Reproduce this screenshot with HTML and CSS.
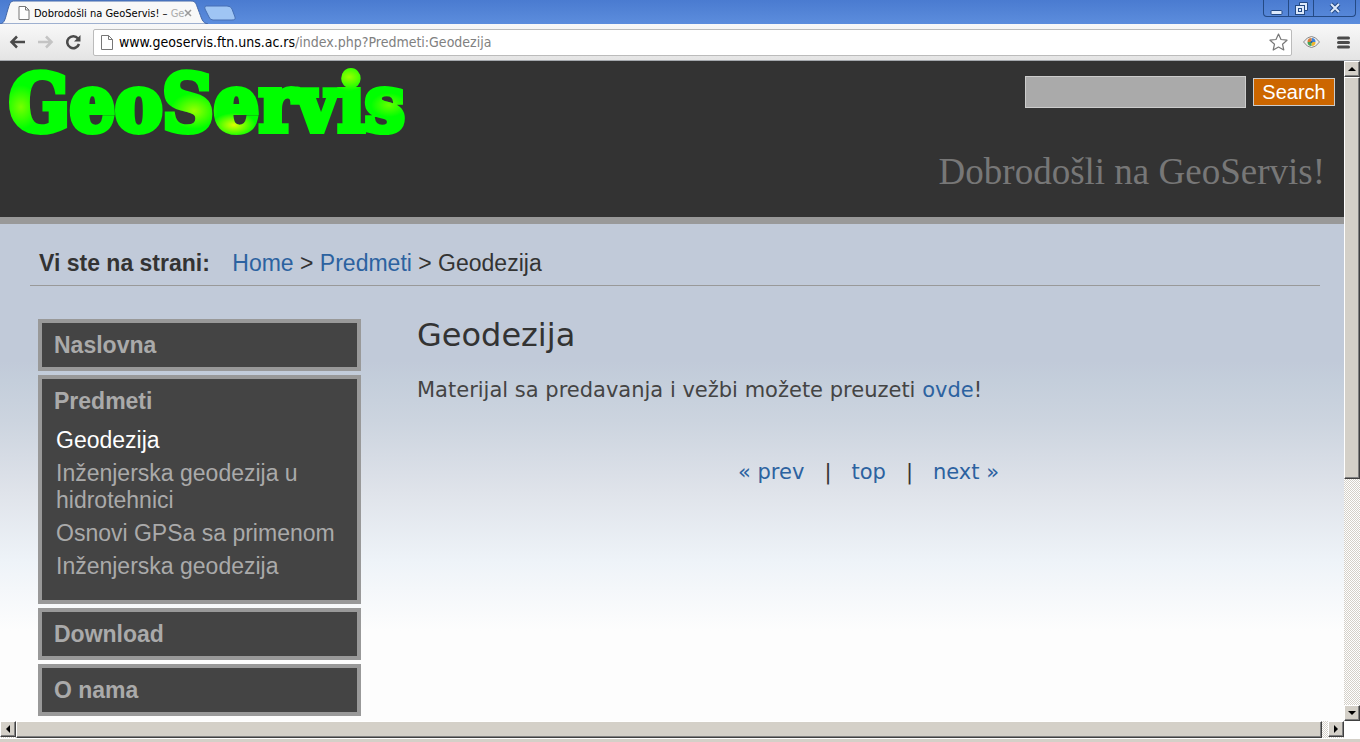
FILE: index.html
```html
<!DOCTYPE html>
<html lang="sr">
<head>
  <meta charset="utf-8">
  <title>Dobrodošli na GeoServis! – Geodezija</title>
  <meta name="viewport" content="width=device-width, initial-scale=1.0">
  <link rel="stylesheet" href="styles.css">
</head>
<body>
  <div class="tabstrip">
    <svg class="tab-shape" width="246" height="24" viewBox="0 0 246 24">
      <path d="M0 24 C5 23 5 19 8 9 C10 3 10 1 15 1 H191 C196 1 196 4 198 9 C202 19 202 23 208 24 Z" fill="#f8f8f8" stroke="#4468a8" stroke-width="1"/>
      <path d="M206 6 H227 Q231 6 232 9 L235 17 Q236 20 232 20 H213 Q210 20 209 17 L205 9 Q204 6 206 6 Z" fill="#9fc5f4" stroke="#466fb4"/>
    </svg>
    <div class="tab">
      <svg width="12" height="14" viewBox="0 0 12 14"><path d="M1 .5 H7.500 L11 4 V13.500 H1 Z M7.500 .5 V4 H11" fill="#fff" stroke="#777"/></svg>
      <span class="tab-title">Dobrodošli na GeoServis! – <span>Ge</span></span>
      <button class="tab-close" aria-label="Close tab"><svg width="8" height="8" viewBox="0 0 8 8"><path d="M1 1 L7 7 M7 1 L1 7" stroke="#999" stroke-width="1.500"/></svg></button>
    </div>
    <div class="window-buttons">
      <button class="minimize" aria-label="Minimize"><svg width="13" height="13" viewBox="0 0 13 13"><rect x="1" y="8.500" width="11" height="4" rx="1" fill="#dce9fb" stroke="#244a85"/></svg></button>
      <button class="restore" aria-label="Restore"><svg width="13" height="13" viewBox="0 0 13 13"><path d="M4.500 .5 H12.500 V8.500 H9.500 V3.500 H4.500 Z" fill="#dce9fb" stroke="#244a85"/><rect x=".5" y="3.500" width="9" height="9" fill="#dce9fb" stroke="#244a85"/><rect x="3.500" y="6.500" width="3" height="3" fill="#dce9fb" stroke="#244a85"/></svg></button>
      <button class="close" aria-label="Close"><svg width="12" height="12" viewBox="0 0 12 12"><path d="M2 2 L10 10 M10 2 L2 10" stroke="#244a85" stroke-width="4"/><path d="M2 2 L10 10 M10 2 L2 10" stroke="#dce9fb" stroke-width="2"/></svg></button>
    </div>
  </div>

  <div class="toolbar">
    <button aria-label="Back"><svg width="17" height="16" viewBox="0 0 17 16"><path d="M16 8 H3 M8 2.500 L2.500 8 L8 13.500" fill="none" stroke="#4a4a4a" stroke-width="2.500"/></svg></button>
    <button aria-label="Forward"><svg width="17" height="16" viewBox="0 0 17 16"><path d="M1 8 H14 M9 2.500 L14.500 8 L9 13.500" fill="none" stroke="#c4c4c4" stroke-width="2.500"/></svg></button>
    <button aria-label="Reload"><svg width="17" height="16" viewBox="0 0 17 16"><path d="M13 4.500 A6 6 0 1 0 14 10" fill="none" stroke="#4a4a4a" stroke-width="2.500"/><path d="M15.500 1 V7.500 H9 Z" fill="#4a4a4a"/></svg></button>
    <div class="address">
      <svg width="12" height="15" viewBox="0 0 12 15"><path d="M.5 .5 H7.500 L11.500 4.500 V14.500 H.5 Z M7.500 .5 V4.500 H11.500" fill="#fff" stroke="#777"/></svg>
      <div class="url">www.geoservis.ftn.uns.ac.rs<span>/index.php?Predmeti:Geodezija</span></div>
      <svg width="19" height="18" viewBox="0 0 19 18"><path d="M9.500 1 L12 6.500 L18 7.200 L13.500 11.200 L14.800 17 L9.500 14 L4.200 17 L5.500 11.200 L1 7.200 L7 6.500 Z" fill="#fff" stroke="#777" stroke-width="1.200" stroke-linejoin="round"/></svg>
    </div>
    <svg class="eye" width="17" height="12" viewBox="0 0 17 12">
      <path d="M.5 6 Q8.500 -5 16.500 6 Q8.500 17 .5 6 Z" fill="#eee" stroke="#888"/>
      <path d="M8.500 6 V2 A4 4 0 0 1 12.500 6 Z" fill="#3d82d8"/><path d="M8.500 6 H12.500 A4 4 0 0 1 8.500 10 Z" fill="#efb62e"/>
      <path d="M8.500 6 V10 A4 4 0 0 1 4.500 6 Z" fill="#44a356"/><path d="M8.500 6 H4.500 A4 4 0 0 1 8.500 2 Z" fill="#dd7b35"/>
      <circle cx="8.500" cy="6" r="1" fill="#22599c"/>
    </svg>
    <button class="menu" aria-label="Menu"><svg width="13" height="13" viewBox="0 0 13 13"><path d="M1.500 2 H11.500 M1.500 6.500 H11.500 M1.500 11 H11.500" stroke="#4a4a4a" stroke-width="3" stroke-linecap="round"/></svg></button>
  </div>

  <div class="viewport">
    <div class="page">
      <header>
        <div class="logo">GeoServis</div>
        <div class="header-right">
          <form class="search">
            <input type="text" aria-label="Search">
            <button type="submit">Search</button>
          </form>
          <div class="slogan">Dobrodošli na GeoServis!</div>
        </div>
      </header>

      <div class="breadcrumb">
        <strong>Vi ste na strani:</strong>
        <a href="#">Home</a> &gt; <a href="#">Predmeti</a> &gt; Geodezija
      </div>

      <div class="columns">
        <nav class="sidebar">
          <div class="box"><a href="#">Naslovna</a></div>
          <div class="box">
            <a href="#">Predmeti</a>
            <ul>
              <li><a class="active" href="#">Geodezija</a></li>
              <li><a href="#">Inženjerska geodezija u hidrotehnici</a></li>
              <li><a href="#">Osnovi GPSa sa primenom</a></li>
              <li><a href="#">Inženjerska geodezija</a></li>
            </ul>
          </div>
          <div class="box"><a href="#">Download</a></div>
          <div class="box"><a href="#">O nama</a></div>
        </nav>

        <main>
          <h1>Geodezija</h1>
          <p>Materijal sa predavanja i vežbi možete preuzeti <a href="#">ovde</a>!</p>
          <div class="pager">
            <a href="#">« prev</a><span>|</span><a href="#">top</a><span>|</span><a href="#">next »</a>
          </div>
        </main>
      </div>
    </div>

    <div class="scroll vertical">
      <div class="scroll-button"><svg width="8" height="4" viewBox="0 0 8 4"><path d="M0 4 L4 0 L8 4 Z"/></svg></div>
      <div class="thumb"></div>
      <div class="track"></div>
      <div class="scroll-button"><svg width="8" height="4" viewBox="0 0 8 4"><path d="M0 0 H8 L4 4 Z"/></svg></div>
    </div>
  </div>

  <div class="scroll horizontal">
    <div class="scroll-button"><svg width="4" height="8" viewBox="0 0 4 8"><path d="M4 0 V8 L0 4 Z"/></svg></div>
    <div class="thumb"></div>
    <div class="track"></div>
    <div class="scroll-button"><svg width="4" height="8" viewBox="0 0 4 8"><path d="M0 0 L4 4 L0 8 Z"/></svg></div>
  </div>
  <div class="taskbar-edge"></div>
</body>
</html>
```
FILE: styles.css
```css
* {
  box-sizing: border-box;
}
body {
  margin: 0;
  min-height: 100vh;
  display: flex;
  flex-direction: column;
  font-family: "Liberation Sans", Arial, sans-serif;
  font-size: 23px;
  color: #333;
}
a {
  color: #2c62a0;
  text-decoration: none;
}
button {
  padding: 0;
  border: none;
  background: none;
  display: flex;
  align-items: center;
  justify-content: center;
}
svg {
  display: block;
  flex: none;
}

/* browser window */
.tabstrip {
  position: relative;
  height: 24px;
  display: flex;
  justify-content: space-between;
  background: linear-gradient(#4a7bd0, #5c8ddd);
}
.tab-shape {
  position: absolute;
  left: 0;
  top: 0;
}
.tab {
  position: relative;
  padding: 2px 0 0 18px;
  display: flex;
  align-items: center;
  gap: 4px;
}
.tab-title {
  font-family: "DejaVu Sans Condensed", sans-serif;
  font-size: 11px;
  color: #000;
  white-space: nowrap;
}
.tab-title span {
  color: #aaa;
}
.tab-close {
  margin-left: -4px;
}
.window-buttons {
  height: 17px;
  margin-right: 4px;
  display: flex;
  border: 1px solid #244a85;
  border-top: none;
  border-radius: 0 0 4px 4px;
}
.window-buttons button {
  width: 25px;
  border-right: 1px solid #244a85;
}
.window-buttons .close {
  width: 41px;
  border-right: none;
}
.toolbar {
  height: 37px;
  padding: 0 10px 0 9px;
  display: flex;
  align-items: center;
  gap: 11px;
  background: linear-gradient(#f8f8f8, #e4e4e4);
  border-bottom: 1px solid #a5a9ae;
}
.address {
  flex: 1;
  height: 27px;
  padding: 0 3px 0 7px;
  display: flex;
  align-items: center;
  gap: 6px;
  background: #fff;
  border: 1px solid #bbb;
  border-radius: 2px;
}
.url {
  flex: 1;
  font-family: "DejaVu Sans Condensed", sans-serif;
  font-size: 14px;
  color: #000;
}
.url span {
  color: #808080;
}
.menu {
  margin-left: 6px;
}

/* scrollbars */
.viewport {
  flex: 1;
  display: flex;
}
.scroll {
  display: flex;
  background: repeating-conic-gradient(#d4d0c8 0 25%, #fff 0 50%) 0 0 / 2px 2px;
}
.vertical {
  width: 16px;
  flex-direction: column;
}
.horizontal {
  height: 17px;
  margin-right: 16px;
}
.scroll-button,
.thumb {
  background: #d4d0c8;
  border: 1px solid #404040;
  border-top-color: #fff;
  border-left-color: #fff;
  box-shadow: inset -1px -1px #808080;
}
.scroll-button {
  width: 16px;
  height: 16px;
  display: flex;
  align-items: center;
  justify-content: center;
}
.vertical .thumb {
  flex: 402;
}
.vertical .track {
  flex: 227;
}
.horizontal .thumb {
  flex: 1;
}
.horizontal .track {
  width: 6px;
}
.taskbar-edge {
  height: 4px;
  background: #d4d0c8;
  border-top: 1px solid #fff;
}

/* site */
.page {
  flex: 1;
  background: linear-gradient(#c1cad9 0, #c1cad9 300px, #c4cedb 320px, #ccd4df 360px, #dfe3ea 430px, #eef3f8 500px, #fdfdfd 570px);
}
header {
  height: 163px;
  padding: 0 9px;
  display: flex;
  justify-content: space-between;
  background: #333;
  border-bottom: 7px solid #999;
}
.logo {
  align-self: flex-start;
  font-family: "DejaVu Serif Condensed", "DejaVu Serif", serif;
  font-weight: bold;
  font-size: 79px;
  line-height: 86px;
  color: transparent;
  background:
    radial-gradient(22px 12px at 225px 64px, #df0, transparent),
    radial-gradient(24px 18px at 185px 50px, #9f0, transparent),
    radial-gradient(18px 22px at 12px 46px, #7f0, transparent),
    radial-gradient(20px 14px at 340px 16px, #9f0, transparent),
    radial-gradient(18px 12px at 380px 44px, #6f0, transparent),
    #0f0;
  -webkit-background-clip: text;
  background-clip: text;
  -webkit-text-stroke: 6px transparent;
}
.header-right {
  display: flex;
  flex-direction: column;
  align-items: flex-end;
}
.search {
  margin-top: 15px;
  display: flex;
  align-items: center;
  gap: 7px;
}
.search input {
  width: 221px;
  height: 32px;
  background: #aaa;
  border: 1px solid #ccc;
}
.search button {
  width: 82px;
  height: 28px;
  font-family: "Liberation Sans", Arial, sans-serif;
  font-size: 20px;
  color: #fff;
  background: #c60;
  border: 1px solid #ccc;
}
.slogan {
  margin-top: 42px;
  padding-right: 10px;
  font-family: "Liberation Serif", "Times New Roman", serif;
  font-size: 37px;
  line-height: 44px;
  color: #777;
}
.breadcrumb {
  margin: 0 24px 0 30px;
  padding: 25px 8px 8px 9px;
  line-height: 28px;
  border-bottom: 1px solid #999;
}
.breadcrumb strong {
  margin-right: 16px;
}
.columns {
  padding: 33px 24px 5px 38px;
  display: flex;
  gap: 56px;
}
.sidebar {
  width: 323px;
  display: flex;
  flex-direction: column;
  gap: 4px;
}
.box {
  padding: 8px 12px;
  line-height: 28px;
  font-weight: bold;
  background: #444;
  border: 4px solid #999;
}
.box a {
  display: block;
  color: #aaa;
}
.box ul {
  margin: 12px 0 6px 2px;
  padding: 0;
  list-style: none;
  line-height: 27px;
  font-weight: normal;
}
.box li {
  padding-bottom: 6px;
}
.box .active {
  color: #fff;
}
main {
  flex: 1;
  font-family: "DejaVu Sans", Verdana, sans-serif;
  font-size: 21px;
  line-height: 28px;
}
h1 {
  margin: 0 0 25px;
  font-weight: normal;
  font-size: 32px;
  line-height: 32px;
}
main p {
  margin: 0 0 54px;
  color: #444;
}
.pager {
  display: flex;
  justify-content: center;
  gap: 20px;
}
```
